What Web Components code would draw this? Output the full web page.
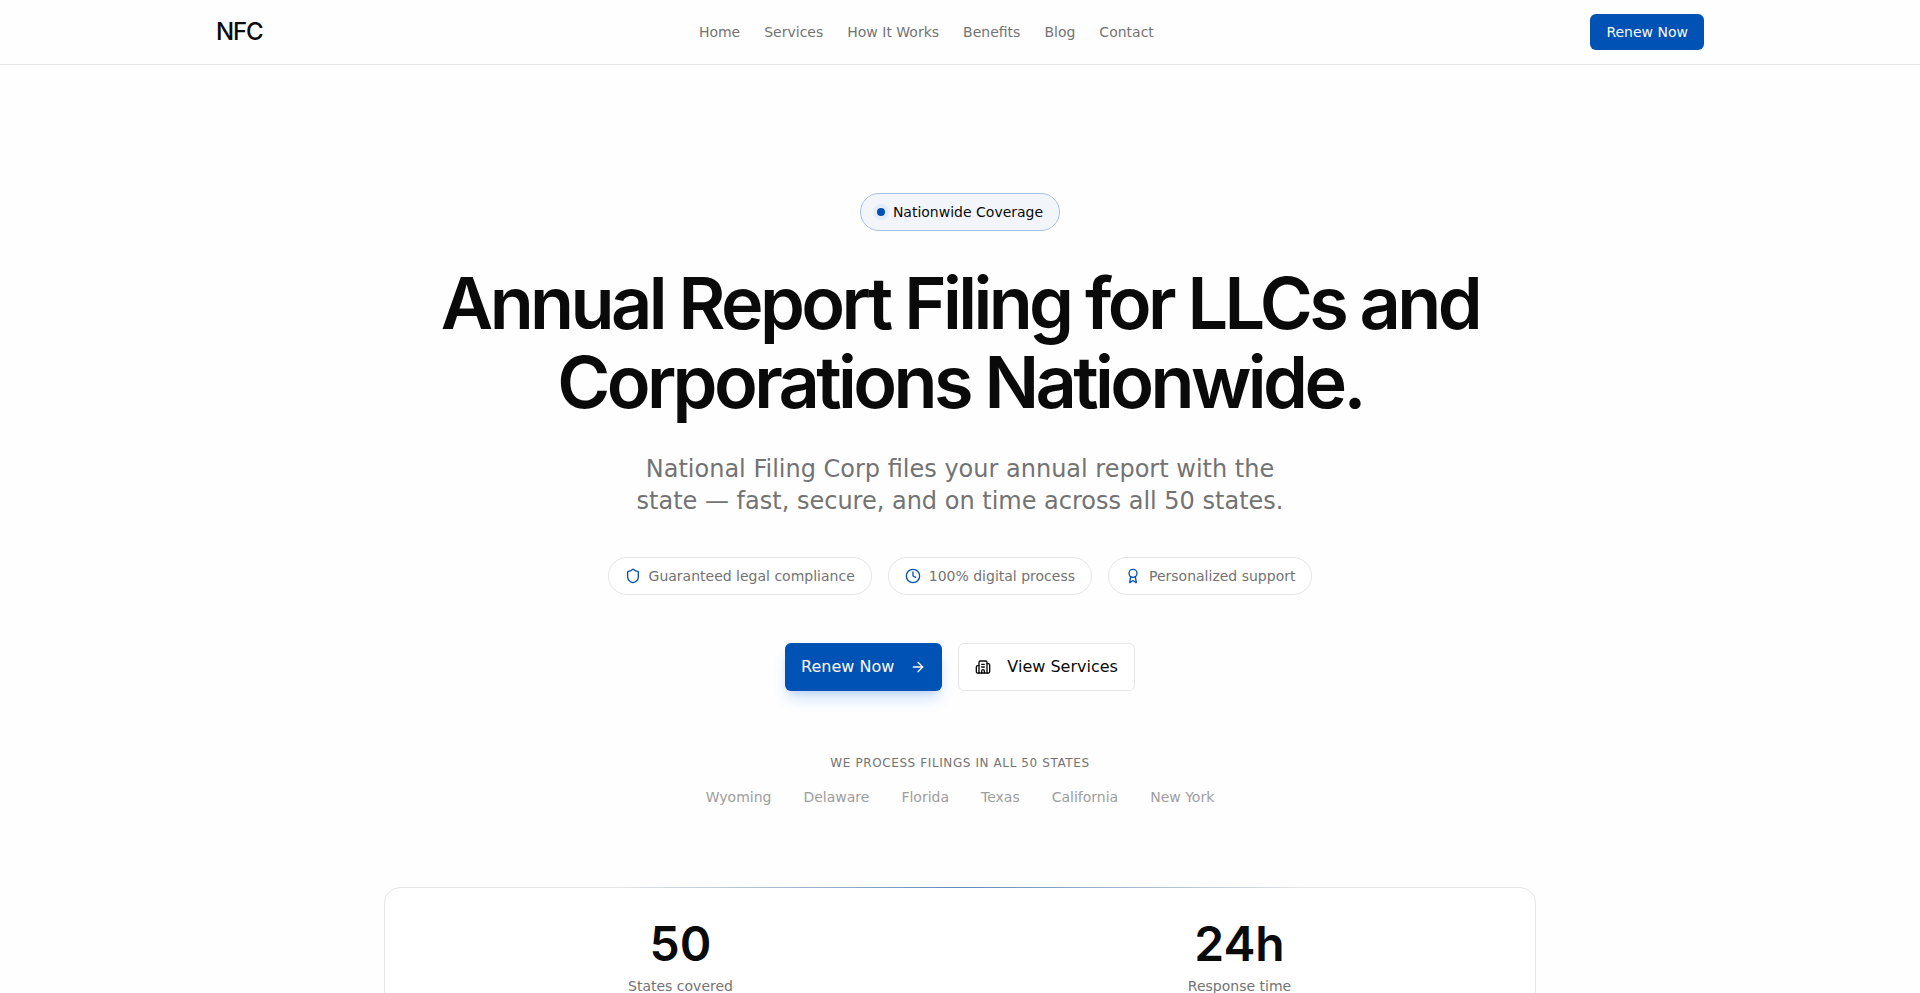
<!DOCTYPE html>
<html lang="en">
<head>
<meta charset="utf-8">
<meta name="viewport" content="width=device-width, initial-scale=1">
<title>NFC | Annual Report Filing</title>
<style>
    :root {
        --primary: #0052b4;
        --text: #0a0a0a;
        --muted: #737373;
        --border: #e5e5e5;
        --heading: Inter, "Liberation Sans", sans-serif;
    }
    body {
        margin: 0;
        background: #fefefe;
        color: var(--text);
        font-family: "DejaVu Sans", sans-serif;
        font-size: 14px;
        line-height: 20px;
    }
</style>
</head>
<body>
<nfc-header>
    <nfc-button slot="action" href="#renew" size="small">Renew Now</nfc-button>
</nfc-header>
<main>
    <nfc-hero>
        <nfc-pill slot="badge" variant="badge">Nationwide Coverage</nfc-pill>
        <span slot="title">Annual Report Filing for LLCs and Corporations Nationwide.</span>
        <span slot="subtitle">National Filing Corp files your annual report with the state — fast, secure, and on time across all 50 states.</span>
        <nfc-pill slot="features" icon="shield">Guaranteed legal compliance</nfc-pill>
        <nfc-pill slot="features" icon="clock">100% digital process</nfc-pill>
        <nfc-pill slot="features" icon="award">Personalized support</nfc-pill>
        <nfc-button slot="actions" href="#renew" shadow>Renew Now<nfc-icon name="arrow"></nfc-icon></nfc-button>
        <nfc-button slot="actions" href="#services" variant="outline"><nfc-icon name="building"></nfc-icon>View Services</nfc-button>
    </nfc-hero>
    <nfc-states></nfc-states>
    <nfc-stats>
        <nfc-stat value="50">States covered</nfc-stat>
        <nfc-stat value="24h">Response time</nfc-stat>
    </nfc-stats>
</main>

<script>
const ICONS = {
    shield: '<path d="M20 13c0 5-3.5 7.5-7.66 8.95a1 1 0 0 1-.67-.01C7.5 20.5 4 18 4 13V6a1 1 0 0 1 1-1c2 0 4.5-1.2 6.24-2.72a1.17 1.17 0 0 1 1.52 0C14.51 3.81 17 5 19 5a1 1 0 0 1 1 1z"/>',
    clock: '<circle cx="12" cy="12" r="10"/><path d="M12 6v6l4 2"/>',
    award: '<path d="m15.477 12.89 1.515 8.526a.5.5 0 0 1-.81.47l-3.58-2.687a1 1 0 0 0-1.197 0l-3.586 2.686a.5.5 0 0 1-.81-.469l1.514-8.526"/><circle cx="12" cy="8" r="6"/>',
    arrow: '<path d="M5 12h14"/><path d="m12 5 7 7-7 7"/>',
    building: '<path d="M10 12h4"/><path d="M10 8h4"/><path d="M14 21v-3a2 2 0 0 0-4 0v3"/><path d="M6 10H4a2 2 0 0 0-2 2v7a2 2 0 0 0 2 2h16a2 2 0 0 0 2-2V9a2 2 0 0 0-2-2h-2"/><path d="M6 21V5a2 2 0 0 1 2-2h8a2 2 0 0 1 2 2v16"/>'
};

class NfcIcon extends HTMLElement {
    constructor() {
        super();
        this._root = this.attachShadow({ mode: 'open' });
    }
    connectedCallback() {
        this._root.innerHTML = `
        <style>
        :host { display: block; flex: none; width: 16px; height: 16px; }
        svg { display: block; width: 100%; height: 100%; }
        </style>
        <svg viewBox="0 0 24 24" fill="none" stroke="currentColor" stroke-width="2" stroke-linecap="round" stroke-linejoin="round" aria-hidden="true">${ICONS[this.getAttribute('name')]}</svg>
        `;
    }
}
window.customElements.define('nfc-icon', NfcIcon);

class NfcButton extends HTMLElement {
    constructor() {
        super();
        this._root = this.attachShadow({ mode: 'open' });
    }
    connectedCallback() {
        this._root.innerHTML = `
        <style>
        :host { display: block; }
        a {
            display: flex;
            align-items: center;
            gap: 16px;
            box-sizing: border-box;
            height: 48px;
            padding: 0 16px;
            border-radius: 6px;
            background: var(--primary);
            color: #fafafa;
            font-size: 16px;
            line-height: 24px;
            text-decoration: none;
            white-space: nowrap;
        }
        :host([size="small"]) a { height: 36px; font-size: 14px; line-height: 20px; }
        :host([shadow]) a { box-shadow: 0 10px 15px -3px rgb(0 100 220 / 20%), 0 4px 6px -4px rgb(0 100 220 / 20%); }
        :host([variant="outline"]) a {
            border: 1px solid var(--border);
            background: #fff;
            color: var(--text);
        }
        </style>
        <a href="${this.getAttribute('href')}"><slot></slot></a>
        `;
    }
}
window.customElements.define('nfc-button', NfcButton);

class NfcPill extends HTMLElement {
    constructor() {
        super();
        this._root = this.attachShadow({ mode: 'open' });
    }
    connectedCallback() {
        const icon = this.getAttribute('icon');
        // badge has a glowing dot instead of an icon
        this._root.innerHTML = `
        <style>
        :host {
            display: flex;
            align-items: center;
            gap: 8px;
            padding: 8px 16px;
            border: 1px solid var(--border);
            border-radius: 20px;
            background: #fff;
            color: var(--muted);
            white-space: nowrap;
        }
        :host([variant="badge"]) {
            border-color: #a8c1e0;
            background: #f2f6fb;
            color: var(--text);
        }
        nfc-icon { color: var(--primary); }
        .dot {
            width: 8px;
            height: 8px;
            border-radius: 50%;
            background: var(--primary);
            box-shadow: 0 0 0 4px rgb(0 82 180 / 6%);
        }
        </style>
        ${icon ? `<nfc-icon name="${icon}"></nfc-icon>` : '<span class="dot"></span>'}
        <slot></slot>
        `;
    }
}
window.customElements.define('nfc-pill', NfcPill);

class NfcHeader extends HTMLElement {
    constructor() {
        super();
        this._root = this.attachShadow({ mode: 'open' });
        this._links = ['Home', 'Services', 'How It Works', 'Benefits', 'Blog', 'Contact'];
    }
    connectedCallback() {
        this._root.innerHTML = `
        <style>
        :host { display: block; border-bottom: 1px solid var(--border); }
        header {
            display: flex;
            align-items: center;
            justify-content: space-between;
            box-sizing: border-box;
            max-width: 1536px;
            height: 64px;
            margin: 0 auto;
            padding: 0 24px;
        }
        a { text-decoration: none; }
        .logo {
            color: var(--text);
            font: 500 24px/32px var(--heading);
            letter-spacing: -0.05em;
        }
        nav { display: flex; gap: 24px; }
        nav a { color: var(--muted); }
        nav a:hover { color: var(--text); }
        </style>
        <header>
            <a class="logo" href="#home">NFC</a>
            <nav>${this._links.map(link => `<a href="#${link.toLowerCase().replaceAll(' ', '-')}">${link}</a>`).join('')}</nav>
            <slot name="action"></slot>
        </header>
        `;
    }
}
window.customElements.define('nfc-header', NfcHeader);

class NfcHero extends HTMLElement {
    constructor() {
        super();
        this._root = this.attachShadow({ mode: 'open' });
    }
    connectedCallback() {
        this._root.innerHTML = `
        <style>
        :host { display: block; }
        section {
            display: flex;
            flex-direction: column;
            align-items: center;
            padding: 128px 24px 64px;
            text-align: center;
        }
        h1 {
            max-width: 1152px;
            margin: 32px 0;
            font: 600 72px/79px var(--heading);
            letter-spacing: -0.05em;
        }
        p {
            max-width: 672px;
            margin: 0 0 40px;
            color: var(--muted);
            font-size: 24px;
            line-height: 32px;
        }
        .row {
            display: flex;
            flex-wrap: wrap;
            justify-content: center;
            gap: 16px;
        }
        .features { margin-bottom: 48px; }
        </style>
        <section>
            <slot name="badge"></slot>
            <h1><slot name="title"></slot></h1>
            <p><slot name="subtitle"></slot></p>
            <div class="row features"><slot name="features"></slot></div>
            <div class="row"><slot name="actions"></slot></div>
        </section>
        `;
    }
}
window.customElements.define('nfc-hero', NfcHero);

class NfcStates extends HTMLElement {
    constructor() {
        super();
        this._root = this.attachShadow({ mode: 'open' });
        this._states = ['Wyoming', 'Delaware', 'Florida', 'Texas', 'California', 'New York'];
    }
    connectedCallback() {
        this._root.innerHTML = `
        <style>
        :host { display: block; padding: 0 24px 80px; text-align: center; }
        p {
            margin: 0 0 16px;
            color: var(--muted);
            font-size: 12px;
            line-height: 16px;
            letter-spacing: 0.05em;
            text-transform: uppercase;
        }
        ul {
            display: flex;
            flex-wrap: wrap;
            justify-content: center;
            gap: 16px 32px;
            margin: 0;
            padding: 0;
            color: #9d9d9d;
            list-style: none;
        }
        </style>
        <p>We process filings in all 50 states</p>
        <ul>${this._states.map(state => `<li>${state}</li>`).join('')}</ul>
        `;
    }
}
window.customElements.define('nfc-states', NfcStates);

class NfcStats extends HTMLElement {
    constructor() {
        super();
        this._root = this.attachShadow({ mode: 'open' });
    }
    connectedCallback() {
        this._root.innerHTML = `
        <style>
        :host { display: block; padding: 0 24px; }
        .card {
            position: relative;
            display: grid;
            grid-template-columns: 1fr 1fr;
            gap: 32px;
            box-sizing: border-box;
            max-width: 1152px;
            margin: 0 auto;
            padding: 32px;
            border: 1px solid var(--border);
            border-radius: 16px;
            background: #fff;
        }
        /* highlight on the top border */
        .card::before {
            content: "";
            position: absolute;
            top: -1px;
            left: 20%;
            right: 20%;
            height: 1px;
            background: linear-gradient(to right, transparent, rgb(0 72 160 / 58%), transparent);
        }
        </style>
        <div class="card"><slot></slot></div>
        `;
    }
}
window.customElements.define('nfc-stats', NfcStats);

class NfcStat extends HTMLElement {
    constructor() {
        super();
        this._root = this.attachShadow({ mode: 'open' });
    }
    connectedCallback() {
        this._root.innerHTML = `
        <style>
        :host { display: block; text-align: center; }
        .value {
            margin-bottom: 8px;
            font: 600 48px/48px var(--heading);
        }
        .label { color: var(--muted); }
        </style>
        <div class="value">${this.getAttribute('value')}</div>
        <div class="label"><slot></slot></div>
        `;
    }
}
window.customElements.define('nfc-stat', NfcStat);
</script>
</body>
</html>
